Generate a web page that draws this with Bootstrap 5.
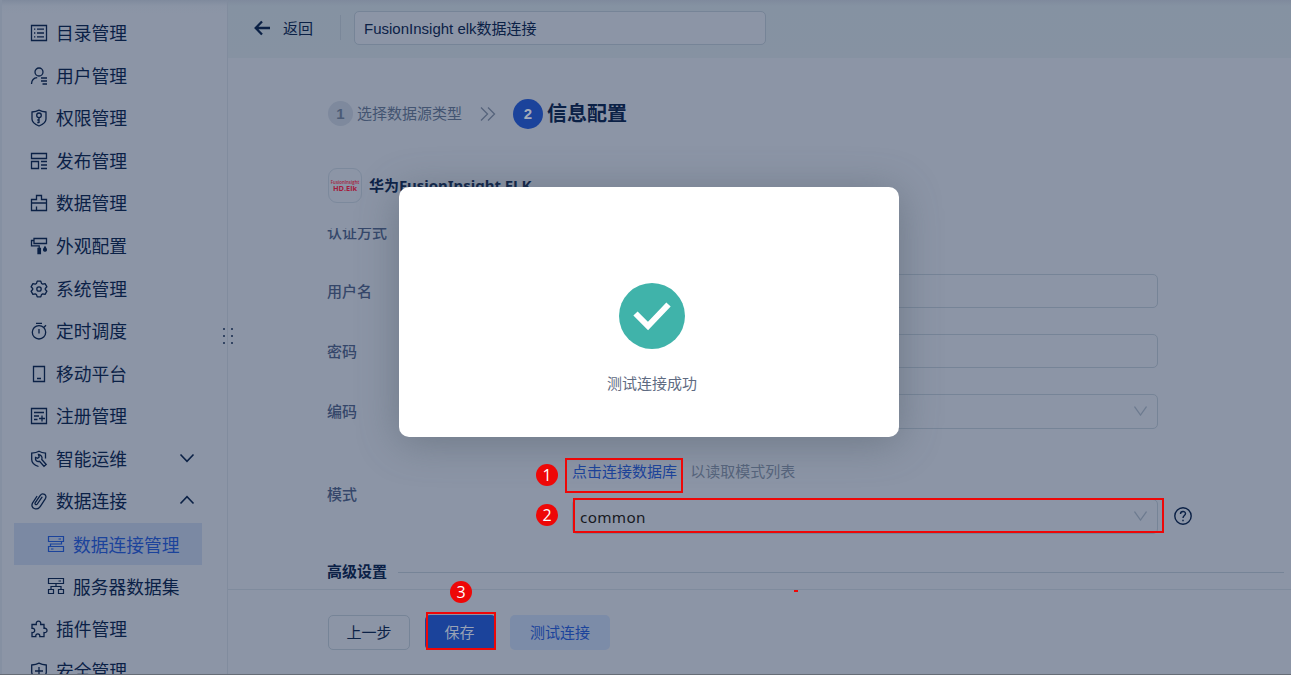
<!DOCTYPE html>
<html lang="zh-CN">
<head>
    <meta charset="UTF-8">
    <meta name="viewport" content="width=device-width, initial-scale=1">
    <title>数据连接管理</title>
    <link href="https://cdn.jsdelivr.net/npm/bootstrap@5.3.3/dist/css/bootstrap.min.css" rel="stylesheet">
    <style>
        body { background: #8c95a6; color: #0b2146; font: 15px/20px "Liberation Sans", "Noto Sans CJK SC", sans-serif; height: 675px; overflow: hidden; }
        svg { fill: none; stroke: currentColor; flex: none; }
        .page { height: 675px; border-bottom: 1px solid #666c76; }
        .sidebar { width: 228px; padding: 11px 0 0; border-left: 2px solid #8590a2; border-right: 1px solid #818c9e; font-size: 17.75px; font-weight: 400; font-family: "Noto Sans CJK SC", sans-serif; background: linear-gradient(#7f8a9d, #8a94a5 6px, #8c95a6 14px); }
        .side-item { height: 42.55px; flex: none; padding-left: 28px; gap: 8px; color: #0b2146; }
        .side-item svg { width: 18px; height: 18px; stroke-width: 1.3; position: relative; top: 1px; }
        .side-item .arrow { width: 16px; height: 10px; margin: 0 32px 0 auto; stroke-width: 1.6; top: 0; }
        .side-sub { margin: 0 25px 0 12px; padding-left: 33px; position: relative; top: 1px; }
        .side-sub svg { stroke-width: 1.2; top: 0; }
        .side-on { background: #7b89a3; color: #1b439b; }
        .topbar { height: 58px; flex: none; background: linear-gradient(#7f8a9d, #8592a2 6px, #8692a2); padding-left: 26px; }
        .topbar > svg { margin-bottom: 2px; }
        .vline { width: 1px; height: 25px; background: #7a8799; margin: 0 13px 3px 28px; }
        .box { border: 1px solid #768497; border-radius: 5px; height: 34px; }
        .name-box { width: 412px; padding: 2px 0 0 9px; margin-bottom: 2px; background: #8c95a6; }
        .steps { height: 110px; flex: none; padding: 1px 0 0 100px; }
        .step-no { width: 25px; height: 25px; border-radius: 50%; background: #7e899d; color: #4b5b76; font-weight: 700; }
        .step-now { width: 30px; height: 30px; background: #1b439b; color: #a3abb9; }
        .step-gap { margin: 0 17px 0 18px; }
        .source { height: 60px; flex: none; padding-left: 100px; font: 700 15px/20px "Noto Sans", "Noto Sans CJK SC", sans-serif; gap: 7px; }
        .source-name { padding-top: 7px; letter-spacing: -.04px; }
        .logo-box { width: 34px; height: 35px; border: 1px solid #7c899c; border-radius: 9px; color: #a51c3c; }
        .logo-a { font: 600 4.4px/6px "Open Sans", sans-serif; }
        .logo-b { font: 700 7.4px/7px "Open Sans", sans-serif; }
        .form-area { height: 361px; flex: none; padding-left: 100px; overflow: hidden; }
        .form-line { height: 60px; color: #35476a; font-weight: 500; }
        .form-line:first-child { margin-top: -26px; height: 59px; }
        .form-name { width: 244px; flex: none; padding-top: 2px; margin-left: -1px; margin-right: 1px; }
        .field { width: 586px; padding: 0 10px 0 7px; }
        .field svg { width: 13px; height: 10px; color: #6d7b90; stroke-width: 1.3; }
        .pick { height: 35px; }
        .mode-line { height: 105px; }
        .mode-tip { margin-bottom: 17px; }
        .link-text { color: #1b439b; font-weight: 400; }
        .hint-text { color: #56647c; font-weight: 400; }
        .step-text { color: #435471; }
        .mode-value { font: 15.3px/20px "Noto Sans", sans-serif; color: #17191e; letter-spacing: .3px; padding-top: 1px; }
        .advanced { height: 52px; font-weight: 600; gap: 11px; margin-left: -1px; }
        .rule { height: 1px; background: #768497; margin-right: 7px; }
        .actions { height: 85px; flex: none; border-top: 1px solid #7f8b9d; padding: 1px 0 0 100px; }
        .actions .btn { height: 35px; padding: 0; font-size: 15px; line-height: 34px; border-radius: 5px; }
        .actions .btn-back { width: 82px; border-color: #768497; color: #0b2146; margin-right: 15px; }
        .actions .btn-keep { width: 71px; background: #1b439b; color: #98a2b5; margin-right: 14px; padding-right: 2px; }
        .actions .btn-test { width: 100px; background: #7c8ca8; color: #1b439b; }
        .result { width: 500px; height: 250px; left: 399px; top: 187px; border-radius: 10px; background: #fff; color: #5f6b82; box-shadow: 0 5px 42px rgba(70, 84, 96, .45); padding-top: 96px; z-index: 2; }
        .result svg { width: 66px; height: 66px; margin-left: 6px; }
        .result div { margin: 25px 0 0 6px; }
        .grip { left: 222px; top: 327px; width: 12px; height: 19px; color: #334563; }
        .mark-box { border: 2px solid #ee0707; z-index: 3; }
        .mark-no { width: 22px; height: 22px; border-radius: 50%; background: #ee0707; color: #fff; font: 16px/22px "Open Sans", sans-serif; text-align: center; z-index: 3; }
    </style>
</head>
<body>
    <div class="page d-flex position-relative">
        <nav class="sidebar d-flex flex-column flex-shrink-0 overflow-hidden">
            <div class="side-item d-flex align-items-center">
                <svg viewBox="0 0 18 18"><path d="M1.5 1.5h15v15h-15zM4 5.2h1.3M4 9h1.3M4 12.8h1.3M7 5.2h7M7 9h7M7 12.8h7"/></svg>目录管理
            </div>
            <div class="side-item d-flex align-items-center">
                <svg viewBox="0 0 18 18"><circle cx="9" cy="5" r="4"/><path d="M1.500 17c.2-3.900 2.200-6 5.700-6.300M11 11h6M11 14h6M12.500 17H17"/></svg>用户管理
            </div>
            <div class="side-item d-flex align-items-center">
                <svg viewBox="0 0 18 18"><path d="M9 1.200c2.500 1.300 4.500 1.600 7 1.800v7c0 3.500-3 5.500-7 7-4-1.500-7-3.500-7-7V3c2.500-.2 4.500-.5 7-1.800z"/><circle cx="9" cy="6.300" r="2.300"/><path d="M9 8.600V14M9 11H7.300M9 13.500H7.300"/></svg>权限管理
            </div>
            <div class="side-item d-flex align-items-center">
                <svg viewBox="0 0 18 18"><path d="M1.500 1.500h15v5h-15zM1.500 9.500h7v7h-7zM11 9.500h6M11 13h6M11 16.500h6"/></svg>发布管理
            </div>
            <div class="side-item d-flex align-items-center">
                <svg viewBox="0 0 18 18"><path d="M1.500 16.500v-11h5v-4h5v4h5v11zM1.500 9h15M6.500 12.500v4"/></svg>数据管理
            </div>
            <div class="side-item d-flex align-items-center">
                <svg viewBox="0 0 18 18"><path d="M4 1.500h12.500v5H4zM4 3.500H1.500v5.300h7.700v3"/><path d="M8 11.500h2.400v5H8z" fill="currentColor"/><path d="M15 9.800c2.600 3.500.9 4.400 0 4.400s-2.600-.9 0-4.400z" fill="currentColor"/></svg>外观配置
            </div>
            <div class="side-item d-flex align-items-center">
                <svg viewBox="0 0 18 18"><path d="M7.200 1.200h3.600l.7 2.200 1.300.8 2.300-.5 1.800 3.100L15.300 8.500v1l1.600 1.700-1.800 3.100-2.300-.5-1.300.8-.7 2.200H7.200l-.7-2.200-1.300-.8-2.300.5-1.800-3.100 1.600-1.700v-1L1.100 6.800l1.800-3.100 2.300.5 1.300-.8z" stroke-linejoin="round"/><circle cx="9" cy="9" r="2.200"/></svg>系统管理
            </div>
            <div class="side-item d-flex align-items-center">
                <svg viewBox="0 0 18 18"><circle cx="9" cy="10.300" r="6.700"/><path d="M6 1.300h6M9 7v4.500M14 5.200l2-2"/></svg>定时调度
            </div>
            <div class="side-item d-flex align-items-center">
                <svg viewBox="0 0 18 18"><path d="M3.500 1.500h11v15h-11zM7 13.500h4"/></svg>移动平台
            </div>
            <div class="side-item d-flex align-items-center">
                <svg viewBox="0 0 18 18"><path d="M1.500 1.500h15v15h-15zM4 5.500h10M4 9h5M4 12.500h3.500M12 8.500v6M9 11.500h6"/></svg>注册管理
            </div>
            <div class="side-item d-flex align-items-center">
                <svg viewBox="0 0 18 18"><path d="M8.500 16.500C4 15 1.700 12.500 1.700 9.500V3.200C4.500 3 7 2.500 9 1.300c2 1.200 4 1.700 6.500 1.900v5.300"/><path d="M8.500 4.500 9.200 7 7.700 8.300 5.500 7.500C5 10.500 7 12 9.500 11.300l4.500 5 2.200-1.800-4.400-5c.9-2.700-.8-4.600-3.300-5z"/></svg>智能运维
                <svg class="arrow" viewBox="0 0 16 10"><path d="M1.500 1.500 8 8.300l6.500-6.800"/></svg>
            </div>
            <div class="side-item d-flex align-items-center">
                <svg viewBox="0 0 18 18"><path d="M12 5.200 7.300 12c-1 1.400-3 .2-2-1.400l4.800-7c2.500-3.600 7.500-.6 5.300 3l-5.200 8c-3 4.400-10.300 1.800-7.700-3.500l4.300-6.600" stroke-linecap="round"/></svg>数据连接
                <svg class="arrow" viewBox="0 0 16 10"><path d="M1.500 8.500 8 1.700l6.500 6.800"/></svg>
            </div>
            <div class="side-item side-sub side-on d-flex align-items-center">
                <svg viewBox="0 0 18 18"><path d="M1.500 1.500h15v5h-15zM1.500 11.500h15v5h-15zM11.500 4H14M4 14h2.500M14.500 6.500V9H3.500v2.500"/></svg>数据连接管理
            </div>
            <div class="side-item side-sub d-flex align-items-center">
                <svg viewBox="0 0 18 18"><path d="M1.500 1.500h15v5h-15zM1.500 12.500h5v4h-5zM11.500 12.500h5v4h-5zM11.500 4H14M9 6.500v3M4 12.500v-3h10v3"/></svg>服务器数据集
            </div>
            <div class="side-item d-flex align-items-center">
                <svg viewBox="0 0 18 18"><path d="M2 4.500h4.300C5.500 0 11.500 0 10.700 4.500H14v3.800c4-.7 4 5 0 4.300v4H9.800c.6-3.700-4.600-3.700-4 0H2v-4c3.600.5 3.600-4.800 0-4.300z"/></svg>插件管理
            </div>
            <div class="side-item d-flex align-items-center">
                <svg viewBox="0 0 18 18"><path d="M9 1.200c2.500 1.300 4.500 1.600 7.300 1.800v7c0 3.500-3.300 5.500-7.300 7-4-1.500-7.300-3.500-7.300-7V3c2.800-.2 4.800-.5 7.300-1.800zM9 5v8M5 9h8"/></svg>安全管理
            </div>
        </nav>

        <main class="flex-grow-1 d-flex flex-column">
            <header class="topbar d-flex align-items-center">
                <svg width="17" height="16" viewBox="0 0 17 16" stroke-width="2.300"><path d="M16 8H2M8 1.500 1.700 8 8 14.500"/></svg>
                <span class="ms-2 ps-1" style="margin-right:-1px">返回</span>
                <span class="vline"></span>
                <div class="box name-box d-flex align-items-center">FusionInsight elk数据连接</div>
            </header>
            <div class="steps d-flex align-items-center">
                <span class="step-no d-flex align-items-center justify-content-center">1</span>
                <span class="step-text ms-1">选择数据源类型</span>
                <svg class="hint-text step-gap" width="16" height="14" viewBox="0 0 16 14" stroke-width="1.300"><path d="m1 .5 6.500 6.500L1 13.500M8 .5 14.500 7 8 13.500"/></svg>
                <span class="step-no step-now d-flex align-items-center justify-content-center">2</span>
                <span class="fs-5 fw-bold ms-1">信息配置</span>
            </div>
            <div class="source d-flex">
                <div class="logo-box d-flex flex-column align-items-center justify-content-center">
                    <span class="logo-a">FusionInsight</span>
                    <span class="logo-b">HD.Elk</span>
                </div>
                <span class="source-name">华为FusionInsight ELK</span>
            </div>
            <div class="form-area">
                <div class="form-line d-flex align-items-center"><span class="form-name">认证方式</span></div>
                <div class="form-line d-flex align-items-center"><span class="form-name">用户名</span><div class="box field"></div></div>
                <div class="form-line d-flex align-items-center"><span class="form-name">密码</span><div class="box field"></div></div>
                <div class="form-line d-flex align-items-center">
                    <span class="form-name">编码</span>
                    <div class="box field pick d-flex align-items-center justify-content-end"><svg viewBox="0 0 13 10"><path d="m.5.500 6 8.500 6-8.500"/></svg></div>
                </div>
                <div class="form-line mode-line d-flex align-items-center">
                    <span class="form-name">模式</span>
                    <div class="pt-2">
                        <div class="mode-tip"><span class="link-text">点击连接数据库</span><span class="hint-text ms-2 ps-1">&#8202;以读取模式列表</span></div>
                        <div class="d-flex align-items-center">
                            <div class="box field pick d-flex align-items-center justify-content-between"><span class="mode-value">common</span><svg viewBox="0 0 13 10"><path d="m.5.500 6 8.500 6-8.500"/></svg></div>
                            <svg class="ms-3" width="18" height="18" viewBox="0 0 18 18" color="#0b2146" stroke-width="1.400"><circle cx="9" cy="9" r="8.200"/><path d="M6.500 7c0-3.300 5-3.300 5-.4C11.500 8.500 9 8.600 9 11M9 12.700v1.500"/></svg>
                        </div>
                    </div>
                </div>
                <div class="advanced d-flex align-items-center"><span>高级设置</span><span class="rule flex-grow-1"></span></div>
            </div>
            <footer class="actions d-flex align-items-center">
                <button class="btn btn-back">上一步</button>
                <button class="btn btn-keep">保存</button>
                <button class="btn btn-test">测试连接</button>
            </footer>
        </main>

        <svg class="grip position-absolute" viewBox="0 0 12 19" stroke-width="2"><path d="M1 2h2M9 2h2M1 9h2M9 9h2M1 16h2M9 16h2"/></svg>

        <div class="result position-absolute text-center">
            <svg viewBox="0 0 66 66"><circle cx="33" cy="33" r="33" fill="#40b3aa" stroke="none"/><path d="M16.500 30.500 29 43 49.500 21.500" stroke="#fff" stroke-width="6"/></svg>
            <div>测试连接成功</div>
        </div>

        <!-- numbered callouts -->
        <span class="mark-box position-absolute" style="left:565px;top:458px;width:118px;height:35px"></span>
        <span class="mark-box position-absolute" style="left:573px;top:498px;width:591px;height:35px"></span>
        <span class="mark-box position-absolute" style="left:426px;top:612px;width:70px;height:38px"></span>
        <span class="mark-box position-absolute" style="left:794px;top:590px;width:4px;height:2px;border-width:1px"></span>
        <span class="mark-no position-absolute" style="left:536px;top:464px">1</span>
        <span class="mark-no position-absolute" style="left:536px;top:504px">2</span>
        <span class="mark-no position-absolute" style="left:450px;top:581px">3</span>
    </div>

    <script src="https://cdn.jsdelivr.net/npm/bootstrap@5.3.3/dist/js/bootstrap.bundle.min.js"></script>
</body>
</html>
